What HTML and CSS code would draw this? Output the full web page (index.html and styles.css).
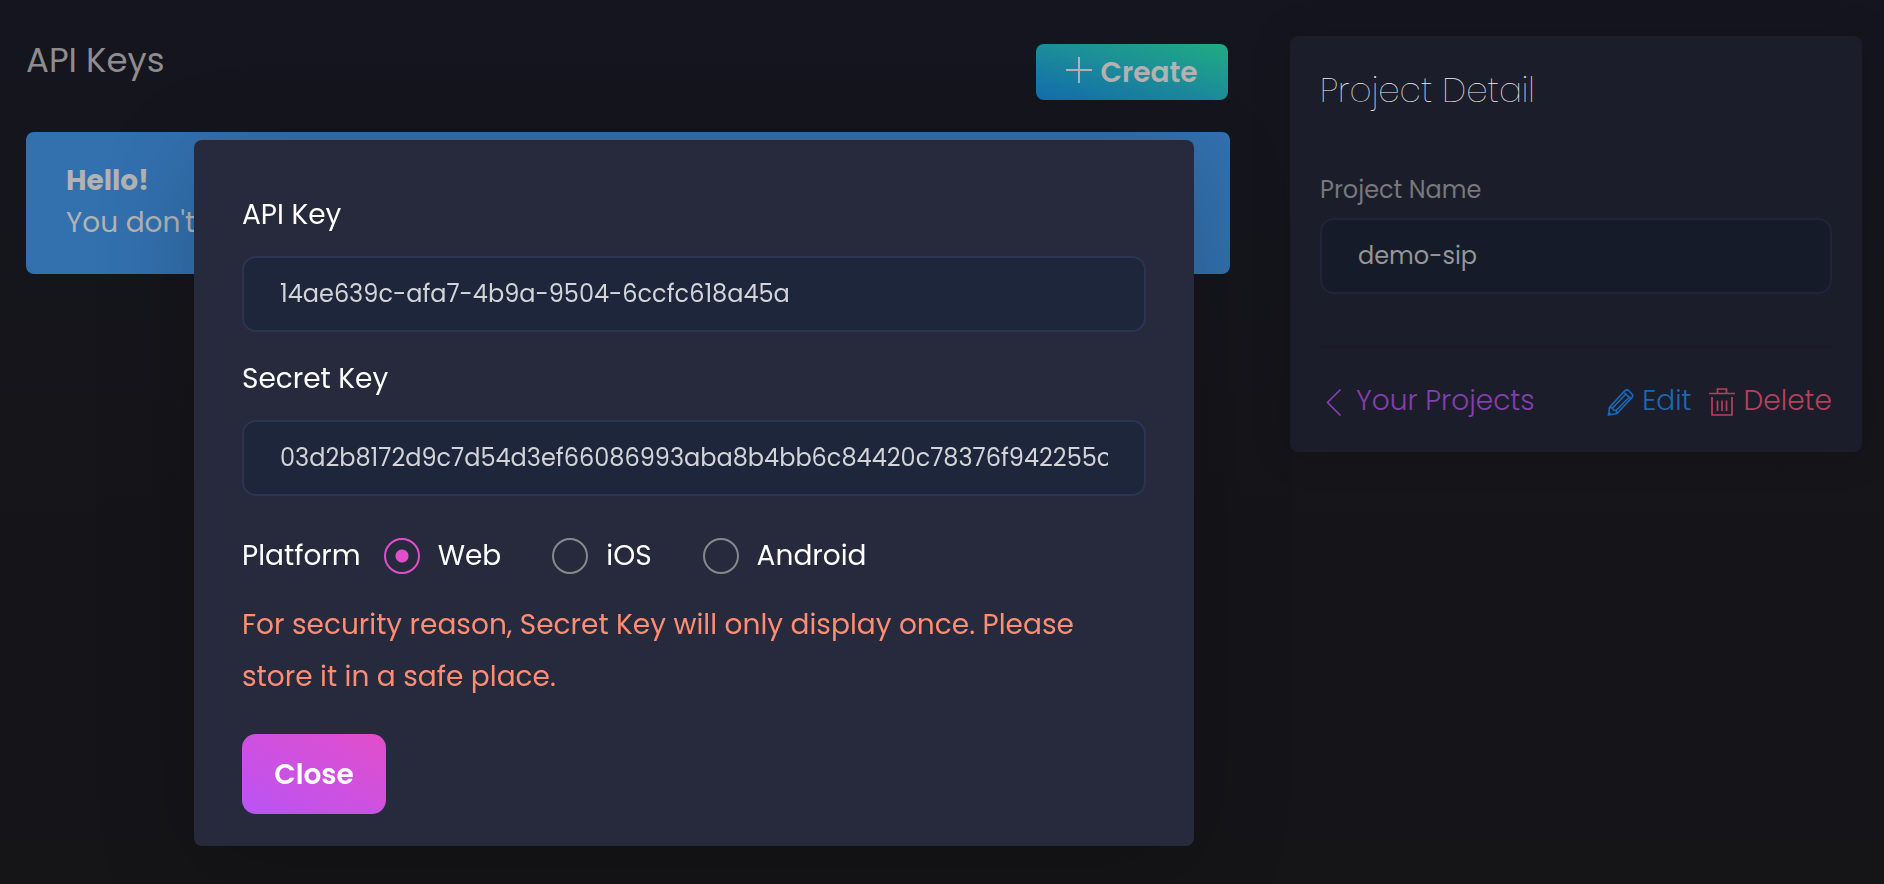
FILE: index.html
```html
<!DOCTYPE html>
<html lang="en">
<head>
<meta charset="utf-8">
<meta name="viewport" content="width=device-width, initial-scale=1">
<title>API Keys</title>
<link rel="stylesheet" href="styles.css">
</head>
<body>
<div class="page">
  <main class="keys">
    <header class="keys-head">
      <h1 class="keys-title">API Keys</h1>
      <button class="btn btn-create" type="button">
        <svg class="icon-plus" viewBox="0 0 26 26" aria-hidden="true"><path d="M13 0v26M0 13h26"/></svg>
        <span>Create</span>
      </button>
    </header>
    <div class="alert">
      <strong class="alert-title">Hello!</strong>
      <span>You don't</span>
    </div>
  </main>
  <aside class="card">
    <h2 class="card-title">Project Detail</h2>
    <label class="card-label" for="project-name">Project Name</label>
    <input class="field field-dim" id="project-name" type="text" value="demo-sip">
    <hr class="card-rule">
    <nav class="links">
      <a class="link link-back" href="#projects">
        <svg class="icon" viewBox="0 0 28 30" aria-hidden="true"><path d="M20.500 3.500L7.500 16.500L20.500 29.500"/></svg>
        <span>Your Projects</span>
      </a>
      <a class="link link-edit" href="#edit">
        <svg class="icon" viewBox="0 0 28 30" aria-hidden="true"><path d="M2.500 29L3.500 21.500L18.500 5C20 3.500 21.500 3.500 22.500 4.500L26 8C27 9 27 10 26 11.500L11 27.500ZM3.500 21.500L6.500 22L7.500 24L10 24.500L11 27.500M6.500 22L20.500 7.500M10 24.500L24 10.500M17.500 6L25 13M2.500 26L5 28.500"/></svg>
        <span>Edit</span>
      </a>
      <a class="link link-delete" href="#delete">
        <svg class="icon" viewBox="0 0 28 30" aria-hidden="true"><path d="M1 7.500H27M9.500 7V3H18.500V7M4 11V29H24V11M9.500 14.500V25M14 14.500V25M18.500 14.500V25"/></svg>
        <span>Delete</span>
      </a>
    </nav>
  </aside>
</div>
<div class="overlay">
  <form class="modal" role="dialog" aria-label="API Key">
    <label class="modal-label" for="api-key">API Key</label>
    <input class="field" id="api-key" type="text" readonly value="14ae639c-afa7-4b9a-9504-6ccfc618a45a">
    <label class="modal-label modal-label-next" for="secret-key">Secret Key</label>
    <input class="field" id="secret-key" type="text" readonly value="03d2b8172d9c7d54d3ef66086993aba8b4bb6c84420c78376f942255c">
    <div class="platforms" role="radiogroup" aria-labelledby="platform-label">
      <span id="platform-label">Platform</span>
      <label class="option"><input class="radio" type="radio" name="platform" checked>Web</label>
      <label class="option"><input class="radio" type="radio" name="platform">iOS</label>
      <label class="option"><input class="radio" type="radio" name="platform">Android</label>
    </div>
    <p class="warning">For security reason, Secret Key will only display once. Please store it in a safe place.</p>
    <button class="btn btn-close" type="button">Close</button>
  </form>
</div>
</body>
</html>
```

FILE: styles.css
```css
* { box-sizing: border-box; }

body {
  margin: 0;
  min-height: 100vh;
  background: linear-gradient(#15151f, #151519 60%, #151518);
  font-family: Poppins, Inter, "Open Sans", sans-serif;
  font-size: 28px;
  color: #fff;
}

.page {
  display: grid;
  grid-template-columns: minmax(0, 1204fr) minmax(0, 572fr);
  align-items: start;
  gap: 60px;
  padding: 36px 22px 36px 26px;
}

.keys-head {
  display: flex;
  justify-content: space-between;
  align-items: flex-start;
  padding: 8px 2px 32px 0;
}

.keys-title {
  margin: 0;
  font-size: 34px;
  font-weight: 400;
  line-height: 32px;
  color: #8d8d8f;
}

.btn {
  border: 0;
  padding: 2px 0 0;
  font-family: inherit;
  font-size: 28px;
  font-weight: 600;
  cursor: pointer;
}

.btn-create {
  display: flex;
  align-items: center;
  justify-content: center;
  gap: 8px;
  width: 192px;
  height: 56px;
  border-radius: 8px;
  background: linear-gradient(to top right, #136eaf, #1c8c9a 50%, #1fac82);
  color: #b3b3b3;
}

.icon-plus {
  width: 26px;
  height: 26px;
  margin-bottom: 6px;
  stroke: currentColor;
  stroke-width: 2;
}

.alert {
  display: flex;
  flex-direction: column;
  padding: 28px 40px 30px;
  border-radius: 8px;
  background: #3270ae;
  color: #b3b3b3;
  line-height: 42px;
}

.alert-title { font-weight: 700; }

.card {
  padding: 30px;
  border-radius: 8px;
  background: #1c1d2a;
  box-shadow: 0 2px 40px rgba(0, 0, 0, 0.15);
}

.card-title {
  margin: 0 0 61px;
  font-size: 34px;
  font-weight: 200;
  line-height: 48px;
  color: #f0f0f0;
}

.card-label {
  display: block;
  margin-bottom: 13px;
  font-size: 24px;
  line-height: 30px;
  color: #77777c;
}

.field {
  display: block;
  width: 100%;
  height: 76px;
  padding: 0 36px 2px;
  border: 2px solid #2b3553;
  border-radius: 14px;
  background: #1e263b;
  color: #d2d4d8;
  font-family: inherit;
  font-size: 24px;
  outline: 0;
}

.field-dim {
  border-color: #1e253a;
  background: #151b29;
  color: #939598;
}

.card-rule {
  margin: 52px 0 32px;
  border: 0;
  border-top: 2px solid #191a25;
}

.links {
  display: flex;
  gap: 16px;
  line-height: 42px;
  font-weight: 300;
}

.link {
  display: flex;
  align-items: center;
  gap: 8px;
  text-decoration: none;
}

.link-back { margin-right: auto; color: #853fae; }
.link-edit { color: #1868b5; }
.link-delete { color: #b4405f; }

.icon {
  width: 28px;
  height: 30px;
  overflow: visible;
  fill: none;
  stroke: currentColor;
  stroke-width: 1.7;
}

.overlay {
  position: fixed;
  inset: 0;
  padding: 140px 20px 20px 194px;
}

.modal {
  max-width: 1000px;
  padding: 54px 48px 32px;
  border-radius: 8px;
  background: #27293d;
  box-shadow: 0 20px 100px rgba(0, 0, 0, 0.2);
}

.modal-label {
  display: block;
  margin-bottom: 20px;
  line-height: 42px;
}

.modal-label-next { margin-top: 26px; }

.platforms {
  display: flex;
  align-items: center;
  gap: 23px;
  margin-top: 34px;
  line-height: 52px;
}

.option {
  display: flex;
  align-items: center;
  gap: 18px;
  margin-right: 28px;
}

.radio {
  appearance: none;
  width: 36px;
  height: 36px;
  margin: 0;
  border: 2px solid #88888c;
  border-radius: 50%;
}

.radio:checked {
  border-color: #e14eca;
  background: radial-gradient(circle, #e14eca 6px, transparent 7px);
}

.warning {
  margin: 17px 0 31px;
  line-height: 52px;
  color: #ff8d72;
}

.btn-close {
  display: block;
  width: 144px;
  height: 80px;
  border-radius: 14px;
  background: linear-gradient(to top right, #ba54f5, #e14eca);
  color: #fff;
}
```
